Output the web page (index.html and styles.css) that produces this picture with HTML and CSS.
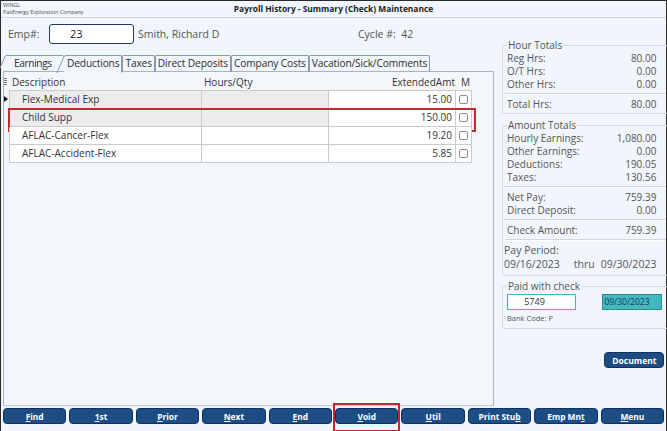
FILE: index.html
```html
<!DOCTYPE html>
<html>
<head>
<meta charset="utf-8">
<link rel="stylesheet" href="styles.css">
</head>
<body>
<div class="window">
  <header class="titlebar">
    <div class="company">
      <div>WINGL</div>
      <div>PakEnergy Exploration Company</div>
    </div>
    <div class="title">Payroll History - Summary (Check) Maintenance</div>
    <div></div>
  </header>
  <div class="main">
    <section class="left">
      <div class="emp-row">
        <span class="emp-lbl">Emp#:</span>
        <div class="emp-input">23</div>
        <span class="emp-name">Smith, Richard D</span>
        <span class="cycle">Cycle #:&nbsp; 42</span>
      </div>
      <div class="tabs">
        <div class="tab slant first">Earnings</div>
        <div class="tab slant active">Deductions</div>
        <div class="tab">Taxes</div>
        <div class="tab">Direct Deposits</div>
        <div class="tab">Company Costs</div>
        <div class="tab">Vacation/Sick/Comments</div>
      </div>
      <div class="grid">
        <div class="grid-head">
          <span class="c-ind"><span class="grip"></span></span>
          <span class="c-desc">Description</span>
          <span class="c-hrs">Hours/Qty</span>
          <span class="c-amt">ExtendedAmt</span>
          <span class="c-m">M</span>
        </div>
        <div class="grid-row first-row shaded">
          <span class="c-ind"><span class="pointer"></span></span>
          <span class="c-desc">Flex-Medical Exp</span>
          <span class="c-hrs"></span>
          <span class="c-amt">15.00</span>
          <span class="c-m"><span class="chk"></span></span>
        </div>
        <div class="grid-row shaded marked">
          <span class="c-ind"></span>
          <span class="c-desc">Child Supp</span>
          <span class="c-hrs"></span>
          <span class="c-amt">150.00</span>
          <span class="c-m"><span class="chk"></span></span>
        </div>
        <div class="grid-row">
          <span class="c-ind"></span>
          <span class="c-desc">AFLAC-Cancer-Flex</span>
          <span class="c-hrs"></span>
          <span class="c-amt">19.20</span>
          <span class="c-m"><span class="chk"></span></span>
        </div>
        <div class="grid-row">
          <span class="c-ind"></span>
          <span class="c-desc">AFLAC-Accident-Flex</span>
          <span class="c-hrs"></span>
          <span class="c-amt">5.85</span>
          <span class="c-m"><span class="chk"></span></span>
        </div>
      </div>
    </section>
    <aside class="right">
      <fieldset class="box">
        <legend>Hour Totals</legend>
        <div class="line"><span>Reg Hrs:</span><span>80.00</span></div>
        <div class="line"><span>O/T Hrs:</span><span>0.00</span></div>
        <div class="line"><span>Other Hrs:</span><span>0.00</span></div>
        <div class="sep"></div>
        <div class="line"><span>Total Hrs:</span><span>80.00</span></div>
      </fieldset>
      <fieldset class="box amounts">
        <legend>Amount Totals</legend>
        <div class="line"><span>Hourly Earnings:</span><span>1,080.00</span></div>
        <div class="line"><span>Other Earnings:</span><span>0.00</span></div>
        <div class="line"><span>Deductions:</span><span>190.05</span></div>
        <div class="line"><span>Taxes:</span><span>130.56</span></div>
        <div class="sep"></div>
        <div class="line"><span>Net Pay:</span><span>759.39</span></div>
        <div class="line"><span>Direct Deposit:</span><span>0.00</span></div>
        <div class="sep"></div>
        <div class="line"><span>Check Amount:</span><span>759.39</span></div>
        <div class="sep"></div>
        <div class="period-lbl">Pay Period:</div>
        <div class="period"><span>09/16/2023</span><span class="thru">thru</span><span>09/30/2023</span></div>
      </fieldset>
      <fieldset class="box paid">
        <legend>Paid with check</legend>
        <div class="paid-row">
          <div class="chk-no">5749</div>
          <div class="chk-date">09/30/2023</div>
        </div>
        <div class="bank">Bank Code: P</div>
      </fieldset>
      <div class="doc-row"><button class="doc-btn">Document</button></div>
    </aside>
  </div>
  <footer class="buttons">
    <button class="btn"><u>F</u>ind</button>
    <button class="btn"><u>1</u>st</button>
    <button class="btn"><u>P</u>rior</button>
    <button class="btn"><u>N</u>ext</button>
    <button class="btn"><u>E</u>nd</button>
    <button class="btn void"><u>V</u>oid</button>
    <button class="btn"><u>U</u>til</button>
    <button class="btn">Print Stu<u>b</u></button>
    <button class="btn">Emp Mn<u>t</u></button>
    <button class="btn"><u>M</u>enu</button>
  </footer>
</div>
</body>
</html>
```
FILE: styles.css
```css
* { box-sizing: border-box; margin: 0; padding: 0; }
html, body { width: 667px; height: 431px; overflow: hidden; }
body {
  font-family: "Open Sans", "Noto Sans", sans-serif;
  font-size: 10px;
  color: #3c3c3c;
  background: #f1f6fc;
}
.window {
  height: 431px;
  border: 1px solid #2a2a2a;
  border-bottom: none;
  display: flex;
  flex-direction: column;
  background: #f1f6fc;
}
.titlebar {
  height: 17px;
  flex: none;
  display: grid;
  grid-template-columns: 1fr auto 1fr;
  align-items: center;
  border-bottom: 1px solid #cdd6e1;
}
.company {
  align-self: start;
  padding: 1px 0 0 2px;
  font-size: 5.5px;
  line-height: 7px;
  color: #555;
  letter-spacing: -0.1px;
}
.title {
  font-weight: 700;
  font-size: 8.4px;
  color: #1d1d1d;
  line-height: 16px;
}
.main { flex: 1; display: flex; min-height: 0; }
.left {
  width: 495px;
  flex: none;
  display: flex;
  flex-direction: column;
  padding-left: 2px;
}
.emp-row {
  height: 32px;
  flex: none;
  display: flex;
  align-items: center;
  padding-left: 5px;
  font-size: 10.5px;
  color: #555;
}
.emp-lbl { width: 41px; }
.emp-input {
  width: 85px;
  height: 20px;
  border: 1.5px solid #1f3a66;
  border-radius: 3px;
  background: #fff;
  padding-left: 20px;
  line-height: 17px;
  color: #222;
  font-size: 11px;
}
.emp-name { width: 220px; margin-left: 4px; }
.tabs {
  margin-top: 5px;
  height: 17px;
  flex: none;
  display: flex;
  padding-left: 2px;
  position: relative;
  z-index: 1;
  margin-bottom: -1px;
}
.tab {
  height: 17px;
  padding: 0 2px;
  border: 1px solid #8799b3;
  border-bottom: none;
  border-radius: 2px 2px 0 0;
  line-height: 15px;
  color: #2e2e2e;
  font-size: 10.2px;
  letter-spacing: -0.15px;
  position: relative;
  white-space: nowrap;
}
.tab.slant { border-left: none; }
.tab.slant::before {
  content: "";
  position: absolute;
  left: -4px;
  top: 0;
  width: 1px;
  height: 17px;
  background: #8799b3;
  transform: skewX(-24deg);
}
.tab.first { width: 59px; padding-left: 9px; border-right: none; letter-spacing: -0.4px; }
.tab.active {
  background: #f1f6fc;
  border-bottom: 1px solid #f1f6fc;
  height: 18px;
  padding-left: 3px;
}
.grid {
  flex: 1;
  width: 491px;
  border: 1px solid #a7b4c5;
  border-bottom: 1px solid #c1cad6;
  background: #f3f7fc;
}
.grid-head, .grid-row { display: flex; height: 18px; align-items: stretch; }
.grid-head { padding-top: 2px; }
.grid-head span, .grid-row span.c-desc, .grid-row span.c-hrs, .grid-row span.c-amt, .grid-row span.c-m {
  line-height: 17px;
}
.c-ind { width: 5px; flex: none; position: relative; }
.c-desc { width: 193px; flex: none; padding-left: 12px; }
.c-hrs { width: 127px; flex: none; padding-left: 2px; }
.c-amt { width: 127px; flex: none; text-align: right; padding-right: 3px; }
.c-m { width: 16px; flex: none; display: flex; align-items: center; justify-content: center; }
.grid-head { color: #333; }
.grid-head .c-desc { padding-left: 3px; }
.grid-head .c-m { justify-content: flex-start; padding-left: 5px; }
.grid-head .c-amt { padding-right: 1px; }
.grip {
  position: absolute;
  left: 0;
  top: 4px;
  width: 3px;
  height: 7px;
  background: repeating-linear-gradient(to bottom, #777 0 1px, transparent 1px 2px);
}
.grid-row { color: #333; position: relative; }
.grid-row .c-desc, .grid-row .c-hrs, .grid-row .c-amt, .grid-row .c-m {
  background: #fff;
  border-right: 1px solid #cacaca;
  border-bottom: 1px solid #cacaca;
}
.grid-row .c-desc { border-left: 1px solid #cacaca; }
.grid-row.first-row .c-desc, .grid-row.first-row .c-hrs, .grid-row.first-row .c-amt, .grid-row.first-row .c-m {
  border-top: 1px solid #cacaca;
}
.grid-row.first-row { height: 19px; }
.grid-row.shaded .c-desc, .grid-row.shaded .c-hrs { background: #ececec; }
.pointer {
  position: absolute;
  left: 0;
  top: 6px;
  width: 0;
  height: 0;
  border-top: 3px solid transparent;
  border-bottom: 3px solid transparent;
  border-left: 4px solid #111;
}
.chk {
  width: 9px;
  height: 9px;
  border: 1px solid #8c8c8c;
  border-radius: 2px;
  background: #fff;
  display: block;
}
.grid-row.marked::after {
  content: "";
  position: absolute;
  left: 4px;
  top: -1px;
  width: 464px;
  height: 20px;
  border: 2px solid #c4282c;
}
.right {
  flex: 1;
  padding: 21px 2px 0 6px;
  display: flex;
  flex-direction: column;
  color: #555;
}
.box {
  border: 1px solid #d3dbe5;
  border-radius: 3px;
  padding: 0 12px 2px 4px;
}
.box legend {
  padding: 0 1px;
  line-height: 13px;
  color: #555;
}
.line {
  display: flex;
  justify-content: space-between;
  line-height: 13px;
  height: 13px;
}
.sep {
  margin: 2px -10px 3px -2px;
  border-top: 1px solid #cfd7e0;
  border-bottom: 1px solid #fff;
}
.amounts { margin-top: 5px; padding-bottom: 4px; }
.period-lbl { margin-left: -3px; line-height: 13px; font-size: 10.5px; }
.period { display: flex; margin-left: -3px; line-height: 14px; font-size: 10.5px; }
.period .thru { margin: 0 6px 0 14px; }
.paid { margin-top: 4px; padding: 0 6px 3px 4px; }
.paid-row { display: flex; justify-content: space-between; margin-top: 1px; }
.chk-no {
  width: 69px;
  height: 16px;
  border: 1.5px solid #47b3bd;
  background: #fff;
  color: #333;
  font-size: 9px;
  line-height: 13px;
  text-align: center;
  padding-right: 14px;
}
.chk-date {
  width: 60px;
  height: 16px;
  border: 1px solid #2d8c98;
  background: #42b9bd;
  color: #1a3566;
  font-size: 8.5px;
  line-height: 14px;
  padding-left: 1px;
}
.bank { font-size: 7.5px; line-height: 14px; color: #555; margin-top: 1px; }
.doc-row { display: flex; justify-content: flex-end; margin-top: 23px; padding-right: 5px; }
.doc-btn {
  width: 60px;
  height: 16px;
  background: #1c4c82;
  border: 1px solid #0f325c;
  border-radius: 4px;
  color: #fff;
  font-family: inherit;
  font-weight: 700;
  font-size: 8.5px;
  line-height: 13px;
}
.buttons {
  height: 25px;
  flex: none;
  display: flex;
  gap: 3px;
  padding: 2px 2px 0 2px;
}
.btn {
  flex: 1;
  height: 16px;
  background: #1c4d84;
  border: 1px solid #0d3160;
  border-radius: 4px;
  color: #fff;
  font-family: inherit;
  font-weight: 700;
  font-size: 8.4px;
  line-height: 13px;
  position: relative;
}
.btn u { text-decoration-thickness: 1px; text-underline-offset: 1px; }
.btn.void::after {
  content: "";
  position: absolute;
  left: -3px;
  top: -6px;
  right: -3px;
  bottom: -9px;
  border: 2px solid #c4282c;
}
```
